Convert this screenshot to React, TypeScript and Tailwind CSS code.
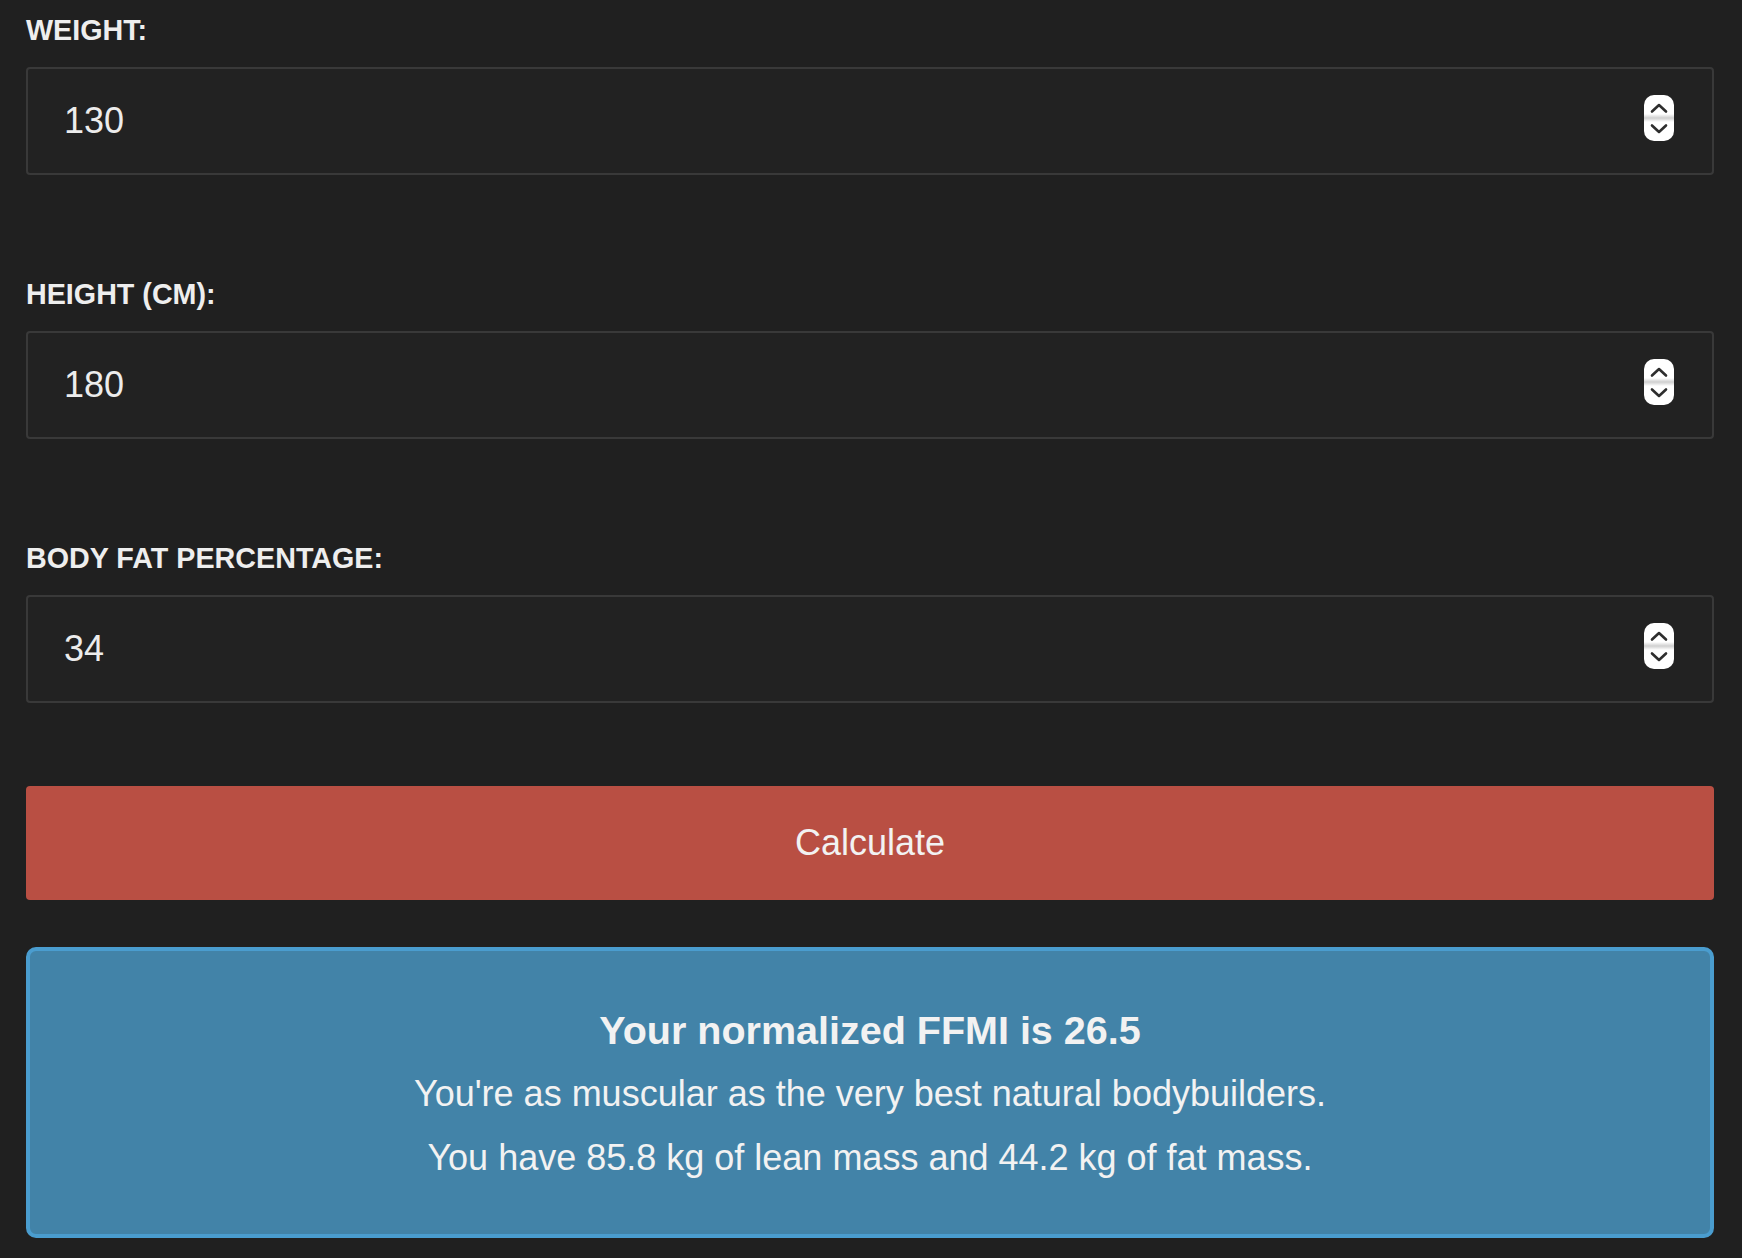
import React, { useState } from 'react';

const FONT = { fontFamily: '"Liberation Sans", Arial, sans-serif' };

const Spinner: React.FC = () => (
  <svg width="30" height="46" viewBox="0 0 30 46" className="shrink-0 mb-[6px]">
    <defs>
      <linearGradient id="sep" x1="0" y1="0" x2="0" y2="1">
        <stop offset="0" stopColor="#ffffff" />
        <stop offset="0.45" stopColor="#d4d4d4" />
        <stop offset="0.55" stopColor="#d4d4d4" />
        <stop offset="1" stopColor="#ffffff" />
      </linearGradient>
    </defs>
    <rect x="0" y="0" width="30" height="46" rx="10" fill="#ffffff" />
    <rect x="0" y="19" width="30" height="8" fill="url(#sep)" />
    <path d="M8 16.5 L15 10 L22 16.5" fill="none" stroke="#2e2e2e" strokeWidth="2.6" strokeLinecap="round" strokeLinejoin="round" />
    <path d="M8 30.5 L15 37 L22 30.5" fill="none" stroke="#2e2e2e" strokeWidth="2.6" strokeLinecap="round" strokeLinejoin="round" />
  </svg>
);

type FieldProps = { label: string; value: string; first?: boolean };

const Field: React.FC<FieldProps> = ({ label, value, first }) => (
  <div className={first ? '' : 'mt-[103px]'}>
    <label className="block text-[28.7px] leading-[32px] font-bold text-[#eeeeee]">{label}</label>
    <div className="mt-[21px] h-[108px] flex items-center justify-between rounded-[4px] border-2 border-[#393939] bg-[#222222] pl-[36px] pr-[38px]">
      <span className="text-[36px] text-[#ececec]">{value}</span>
      <Spinner />
    </div>
  </div>
);

export default function App() {
  const [weight] = useState('130');
  const [height] = useState('180');
  const [bodyFat] = useState('34');

  return (
    <div className="min-h-screen bg-[#202020] pl-[26px] pr-[28px] pt-[14px] pb-[20px]" style={FONT}>
      <Field label="WEIGHT:" value={weight} first />
      <Field label="HEIGHT (CM):" value={height} />
      <Field label="BODY FAT PERCENTAGE:" value={bodyFat} />

      <button className="mt-[83px] w-full h-[114px] rounded-[4px] bg-[#b94f43] text-[36px] text-[#f2f2f2]">
        Calculate
      </button>

      <div className="mt-[47px] rounded-[10px] border-4 border-[#4a9dcf] bg-[#4283a8] pt-[47px] pb-[44px] text-center text-[#f2f2f2]">
        <div className="text-[39.5px] leading-[64px] font-bold">Your normalized FFMI is 26.5</div>
        <div className="text-[36px] leading-[64px]">You're as muscular as the very best natural bodybuilders.</div>
        <div className="text-[36px] leading-[64px]">You have 85.8 kg of lean mass and 44.2 kg of fat mass.</div>
      </div>
    </div>
  );
}
